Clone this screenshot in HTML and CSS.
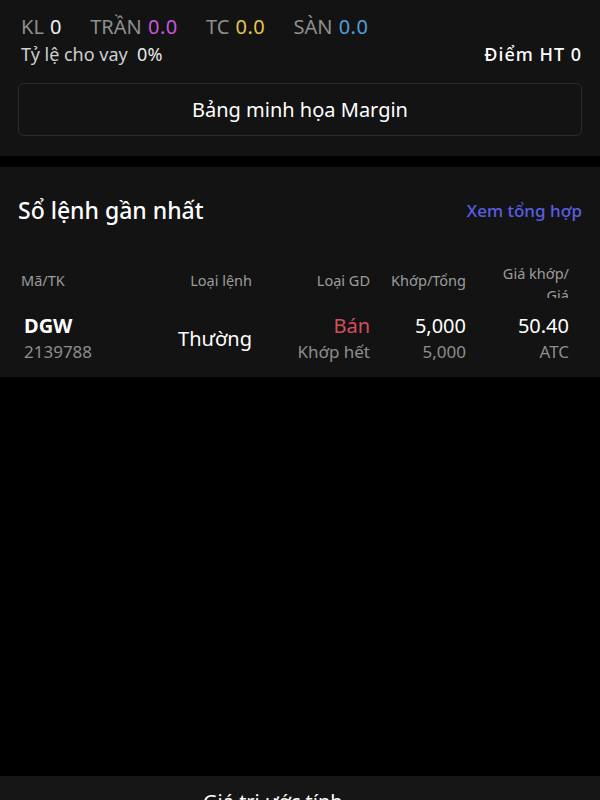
FILE: index.html
```html
<!DOCTYPE html>
<html lang="vi">
<head>
    <meta charset="UTF-8">
    <meta name="viewport" content="width=device-width, initial-scale=1.0">
    <title>Sổ lệnh</title>
    <link rel="stylesheet" href="styles.css">
</head>
<body>
    <div class="panel info">
        <div class="prices">
            <span class="lbl">KL</span> <span class="val">0</span>
            <span class="lbl">TRẦN</span> <span class="val ceil">0.0</span>
            <span class="lbl">TC</span> <span class="val ref">0.0</span>
            <span class="lbl">SÀN</span> <span class="val floor">0.0</span>
        </div>
        <div class="ratio">
            <span>Tỷ lệ cho vay &nbsp;<b>0%</b></span>
            <span class="point">Điểm HT 0</span>
        </div>
        <button class="margin-btn">Bảng minh họa Margin</button>
    </div>

    <div class="panel orders">
        <div class="orders-head">
            <h2>Sổ lệnh gần nhất</h2>
            <a class="see-all">Xem tổng hợp</a>
        </div>
        <div class="grid thead">
            <div class="c1">Mã/TK</div>
            <div>Loại lệnh</div>
            <div>Loại GD</div>
            <div>Khớp/Tổng</div>
            <div class="two">Giá khớp/<br>Giá</div>
        </div>
        <div class="grid trow">
            <div class="c1"><div class="sym">DGW</div><div class="sub">2139788</div></div>
            <div class="kind">Thường</div>
            <div><div class="sell">Bán</div><div class="sub">Khớp hết</div></div>
            <div><div>5,000</div><div class="sub">5,000</div></div>
            <div><div>50.40</div><div class="sub">ATC</div></div>
        </div>
    </div>

    <div class="empty"></div>

    <div class="bottom-bar">Giá trị ước tính</div>
</body>
</html>
```

FILE: styles.css
```css
body {
    margin: 0;
    background: #000000;
    color: #ffffff;
    font-family: 'Noto Sans', 'DejaVu Sans', sans-serif;
}
.panel {
    background: #131313;
}
.info {
    padding: 15px 18px 20px 21px;
    margin-bottom: 11px;
}
.prices {
    font-size: 20px;
    line-height: 24px;
}
.prices .lbl {
    color: #8f8f8f;
    margin-left: 23px;
}
.prices .lbl:first-child {
    margin-left: 0;
}
.prices .val {
    color: #f2f2f2;
    letter-spacing: 0.5px;
    margin-left: 1px;
}
.prices .ceil { color: #c25ad8; }
.prices .ref { color: #e3c64c; }
.prices .floor { color: #4f9fdc; }
.ratio {
    display: flex;
    justify-content: space-between;
    font-size: 18px;
    line-height: 22px;
    margin-top: 4px;
    color: #cfcfcf;
}
.ratio b {
    font-weight: normal;
    color: #e8e8e8;
}
.ratio .point {
    color: #ffffff;
    font-weight: 500;
    letter-spacing: 1px;
}
.margin-btn {
    display: block;
    width: calc(100% + 3px);
    margin: 18px 0 0 -3px;
    height: 53px;
    background: #131313;
    border: 1px solid #2c2c2c;
    border-radius: 6px;
    color: #ffffff;
    font-family: inherit;
    font-size: 20px;
}
.orders {
    padding: 28px 18px 12px 18px;
}
.orders-head {
    display: flex;
    justify-content: space-between;
    align-items: center;
    height: 30px;
}
.orders-head h2 {
    margin: 0;
    font-size: 23px;
    font-weight: 500;
}
.see-all {
    color: #5b5ee3;
    font-size: 17px;
    font-weight: 500;
}
.grid {
    display: grid;
    grid-template-columns: 131px 100px 118px 96px 103px;
    padding-left: 3px;
    text-align: right;
}
.grid .c1 {
    text-align: left;
}
.thead {
    margin-top: 37px;
    height: 36px;
    overflow: hidden;
    color: #9c9c9c;
    font-size: 14.5px;
    line-height: 22px;
}
.thead > div {
    padding-top: 7px;
}
.thead > .two {
    padding-top: 0;
}
.trow {
    margin-top: 15px;
    font-size: 20px;
    line-height: 26px;
}
.trow .c1 {
    padding-left: 3px;
}
.trow .sym {
    font-weight: 700;
}
.trow .sub {
    color: #8e8e8e;
    font-size: 17px;
}
.trow .kind {
    align-self: center;
    font-size: 20px;
}
.trow .sell {
    color: #d44f5c;
}
.empty {
    height: 399px;
}
.bottom-bar {
    background: #161616;
    height: 60px;
    padding-top: 12px;
    padding-left: 203px;
    font-size: 20px;
    box-sizing: border-box;
}
```
